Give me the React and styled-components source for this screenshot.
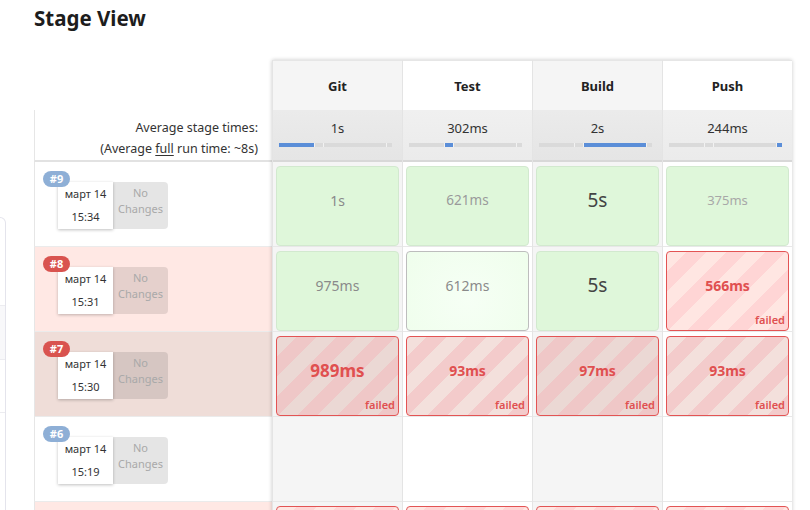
import React from 'react';
import styled, { createGlobalStyle } from 'styled-components';

const GlobalStyle = createGlobalStyle`
    * { box-sizing:border-box; }
    body {
        margin:0;
        background:#fff;
        font-family:"Noto Sans", "Open Sans", sans-serif;
        color:#333;
    }
`;

const Page = styled.div`
    display:flex;
    width:810px;
    height:510px;
    overflow:hidden;
`;

const SideStub = styled.div`
    flex:none;
    width:6px;
    height:320px;
    margin-top:217px;
    border:1px solid #e4e4ec;
    border-left:none;
    border-radius:0 8px 0 0;
    display:flex;
    flex-direction:column;
        .band {
            height:55px;
            margin-top:87px;
            border-top:1px solid #ececf0;
            border-bottom:1px solid #ececf0;
            background:#f8f8fa;
        }
        .line {
            height:53px;
            border-bottom:1px solid #ececf0;
        }
`;

const Main = styled.div`
    padding-left:28px;
    display:flex;
    flex-direction:column;
`;

const Title = styled.h2`
    margin:3px 0 0;
    font-size:20.5px;
    line-height:30px;
    font-weight:700;
    color:#1d1d1d;
`;

const Table = styled.div`
    display:flex;
    align-items:flex-start;
    margin-top:27px;
`;

const LabelColumn = styled.div`
    flex:none;
    width:238px;
`;

const HeadSpacer = styled.div`
    height:50px;
`;

const AvgLabel = styled.div`
    height:52px;
    padding:7px 14px 0 0;
    border-left:1px solid #e6e6e6;
    border-bottom:2px solid #e2e2e2;
    text-align:right;
    font-size:12.5px;
    line-height:21px;
    color:#333;
        u { text-underline-offset:2px; }
`;

const rowBg = { plain:'#fff', failed:'#ffe8e4', selected:'#efddd8' };

const RunLabel = styled.div`
    height:85px;
    padding:20px 0 0 23px;
    border-left:1px solid #e6e6e6;
    border-bottom:1px solid #ebebeb;
    background:${p => rowBg[p.$tone]};
`;

const RunBox = styled.div`
    position:relative;
    display:flex;
    width:110px;
    height:47px;
`;

const Badge = styled.span`
    position:absolute;
    left:-15px;
    top:-11px;
    z-index:1;
    width:27px;
    height:16px;
    border-radius:8px;
    background:${p => p.$failed ? '#d9534f' : '#8eafd6'};
    color:#fff;
    font-size:11px;
    font-weight:700;
    line-height:16px;
    text-align:center;
`;

const DateBox = styled.div`
    width:55px;
    background:#fff;
    box-shadow:0 1px 3px rgba(0,0,0,0.25);
    display:flex;
    flex-direction:column;
    align-items:center;
    font-size:11px;
    line-height:23px;
    color:#333;
`;

const ChangesBox = styled.div`
    width:55px;
    padding-top:3px;
    border-radius:0 4px 4px 0;
    background:rgba(0,0,0,0.1);
    display:flex;
    flex-direction:column;
    align-items:center;
    font-size:11px;
    line-height:16px;
    color:#a9a9a9;
`;

const StagesPanel = styled.div`
    display:flex;
    box-shadow:0 0 4px rgba(0,0,0,0.22);
`;

const StageColumn = styled.div`
    width:130px;
    border-left:1px solid #e4e4e4;
    background:${p => p.$alt ? '#fff' : '#f5f5f5'};
`;

const StageHead = styled.div`
    height:50px;
    display:flex;
    align-items:center;
    justify-content:center;
    border-top:1px solid #e6e6e6;
    font-size:13px;
    font-weight:700;
    color:#222;
`;

const StageAvg = styled.div`
    height:52px;
    padding:8px 6px 0;
    border-bottom:2px solid #d8d8d8;
    background:${p => p.$alt
        ? 'linear-gradient(#f0f0f0, #ebebeb)'
        : 'linear-gradient(#ebebeb, #e5e5e5)'};
    text-align:center;
    font-size:13px;
    line-height:20px;
    color:#333;
`;

const Bar = styled.div`
    display:flex;
    gap:1px;
    width:113px;
    height:4px;
    margin-top:5px;
    background:#f2f2f2;
`;

const Segment = styled.div`
    flex:none;
    width:${p => p.$w}px;
    background:${p => p.$on ? '#5b8ed8' : '#dadada'};
`;

const StageCell = styled.div`
    height:85px;
    padding:4px 3px 0;
    border-bottom:1px solid #e8e8e8;
`;

const stripes = {
    failed:['#ffe6e2', '#ffd5d5'],
    selected:['#ebd8d4', '#efc7c7'],
    selectedAlt:['#f3e0dc', '#f3cbcb'],
};

const StageBox = styled.div`
    height:80px;
    display:flex;
    flex-direction:column;
    border-radius:4px;
    ${p => p.$kind === 'ok' && `
        background:#dff7da;
        border:1px solid #d2e9cf;
    `}
    ${p => p.$kind === 'hover' && `
        background:radial-gradient(circle at 50% 60%, #f6fff5, #effeec);
        border:1px solid #bdbdbd;
    `}
    ${p => p.$kind === 'failed' && `
        background:repeating-linear-gradient(135deg,
            ${stripes[p.$shade][0]} 0 14px,
            ${stripes[p.$shade][1]} 14px 28px);
        border:1px solid #e35454;
    `}
`;

const Value = styled.div`
    margin-top:23px;
    height:20px;
    display:flex;
    align-items:center;
    justify-content:center;
    font-size:${p => p.$size}px;
    font-weight:${p => p.$failed ? 700 : 400};
    color:${p => p.$failed ? '#e05050' : p.$color};
`;

const FailedNote = styled.div`
    margin-top:auto;
    padding:0 3px 2px 0;
    text-align:right;
    font-size:11px;
    line-height:16px;
    font-weight:600;
    color:#e05050;
`;

const segments = [35, 8, 62, 5];

const stages = [
    { name:'Git', avg:'1s' },
    { name:'Test', avg:'302ms' },
    { name:'Build', avg:'2s' },
    { name:'Push', avg:'244ms' },
];

const ok = (t, size, color) => ({ kind:'ok', t, size, color });
const fail = (t, size) => ({ kind:'failed', t, size });

// the last run only peeks in at the bottom edge, so it is drawn without its texts
const runs = [
    { id:9, failed:false, tone:'plain', date:'март 14', time:'15:34',
      cells:[ok('1s', 14, '#8a8a8a'), ok('621ms', 13.5, '#9a9a9a'), ok('5s', 19, '#444'), ok('375ms', 13, '#a8a8a8')] },
    { id:8, failed:true, tone:'failed', date:'март 14', time:'15:31',
      cells:[ok('975ms', 14, '#8a8a8a'), { ...ok('612ms', 14, '#8a8a8a'), kind:'hover' }, ok('5s', 19, '#444'), fail('566ms', 14)] },
    { id:7, failed:true, tone:'selected', date:'март 14', time:'15:30',
      cells:[fail('989ms', 17), fail('93ms', 14), fail('97ms', 14), fail('93ms', 14)] },
    { id:6, failed:false, tone:'plain', date:'март 14', time:'15:19',
      cells:[null, null, null, null] },
    { id:5, failed:true, tone:'failed', peek:true,
      cells:[fail('', 14), fail('', 14), fail('', 14), fail('', 14)] },
];

const shadeFor = (tone, alt) => tone === 'selected' ? (alt ? 'selectedAlt' : 'selected') : 'failed';

const App = () => {
    return(
        <>
            <GlobalStyle />
            <Page>
                <SideStub><div className="band" /><div className="line" /></SideStub>
                <Main>
                    <Title>Stage View</Title>
                    <Table>
                        <LabelColumn>
                            <HeadSpacer />
                            <AvgLabel>
                                <div>Average stage times:</div>
                                <div>(Average <u>full</u> run time: ~8s)</div>
                            </AvgLabel>
                            {runs.map(run => (
                                <RunLabel key={run.id} $tone={run.tone}>
                                    {!run.peek && (
                                        <RunBox>
                                            <Badge $failed={run.failed}>#{run.id}</Badge>
                                            <DateBox>
                                                <span>{run.date}</span>
                                                <span>{run.time}</span>
                                            </DateBox>
                                            <ChangesBox>
                                                <span>No</span>
                                                <span>Changes</span>
                                            </ChangesBox>
                                        </RunBox>
                                    )}
                                </RunLabel>
                            ))}
                        </LabelColumn>
                        <StagesPanel>
                            {stages.map((stage, i) => {
                                const alt = i % 2 === 1;
                                return (
                                    <StageColumn key={stage.name} $alt={alt}>
                                        <StageHead>{stage.name}</StageHead>
                                        <StageAvg $alt={alt}>
                                            <div>{stage.avg}</div>
                                            <Bar>
                                                {segments.map((w, j) => (
                                                    <Segment key={j} $w={w} $on={j === i} />
                                                ))}
                                            </Bar>
                                        </StageAvg>
                                        {runs.map(run => {
                                            const c = run.cells[i];
                                            return (
                                                <StageCell key={run.id}>
                                                    {c && (
                                                        <StageBox $kind={c.kind} $shade={shadeFor(run.tone, alt)}>
                                                            {!run.peek && (
                                                                <Value $size={c.size} $color={c.color} $failed={c.kind === 'failed'}>
                                                                    {c.t}
                                                                </Value>
                                                            )}
                                                            {c.kind === 'failed' && !run.peek && <FailedNote>failed</FailedNote>}
                                                        </StageBox>
                                                    )}
                                                </StageCell>
                                            );
                                        })}
                                    </StageColumn>
                                );
                            })}
                        </StagesPanel>
                    </Table>
                </Main>
            </Page>
        </>
    );
}

export default App;
